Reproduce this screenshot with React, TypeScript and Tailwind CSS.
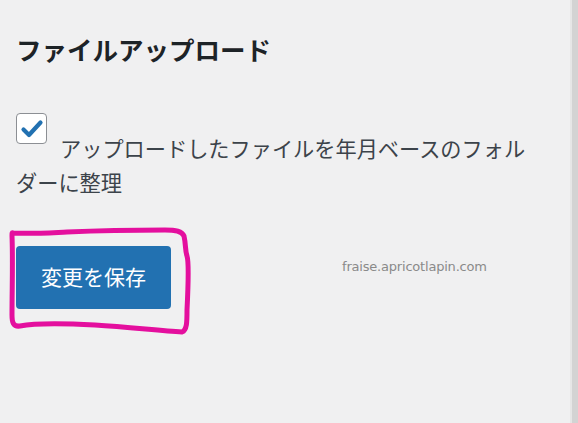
const jp = "font-['Noto_Sans_CJK_JP','Noto_Sans',sans-serif]";

function Scribble() {
  // hand-drawn highlight around the save button
  return (
    <svg
      className="pointer-events-none absolute left-0 top-0"
      width="200"
      height="345"
      viewBox="0 0 200 345"
      fill="none"
    >
      <path
        d="M13 233 C 30 234, 45 233, 67 232 C 90 231, 130 230, 165 230 C 176 230, 182 231, 184 236 C 186 245, 185 250, 187 256 C 189 262, 188 290, 187 310 C 187 322, 187 330, 182 332 C 160 331, 130 327, 95 325 C 60 323, 35 323, 20 326 C 13 327, 12 322, 12 315 C 12 290, 13 260, 12 236 C 12 233, 12 232, 13 233 Z"
        stroke="#e40f9e"
        strokeWidth="5"
        strokeLinejoin="round"
        strokeLinecap="round"
      />
    </svg>
  );
}

function CheckMark() {
  return (
    <svg width="28" height="28" viewBox="0 0 28 28" fill="none">
      <path d="M5.5 14.5 L11 20 L22.5 7.5" stroke="#2271b1" strokeWidth="4.2" strokeLinecap="round" strokeLinejoin="round" />
    </svg>
  );
}

export default function App() {
  return (
    <div className={`flex h-[423px] w-[578px] overflow-hidden bg-[#f0f0f1] ${jp}`}>
      <div className="relative flex-1 pl-4 pr-[36px]">
        <h2 className="mt-[31px] text-[25.5px] font-bold leading-[36px] text-[#1d2327]">ファイルアップロード</h2>

        <label className="mt-[46px] block text-[21.2px] leading-[34px] text-[#3c434a]">
          <span className="mr-[13px] inline-flex h-[31px] w-[31px] items-center justify-center rounded-[4px] border-[1.5px] border-[#8c8f94] bg-white align-[14px]">
            <CheckMark />
          </span>
          アップロードしたファイルを年月ベースのフォルダーに整理
        </label>

        <button
          type="button"
          className="mt-[47px] flex h-[63px] w-[155px] items-center justify-center rounded-[4px] bg-[#2271b1] text-[21px] text-white"
        >
          変更を保存
        </button>

        <Scribble />

        <span className="pointer-events-none absolute left-[342px] top-[257px] font-['DejaVu_Sans',sans-serif] text-[13px] tracking-[-0.2px] text-[#8a8a8a]">
          fraise.apricotlapin.com
        </span>
      </div>
      <div className="w-[2px] bg-[#e6e6e6]" />
      <div className="w-[6px] bg-[#d3d3d3]" />
    </div>
  );
}
